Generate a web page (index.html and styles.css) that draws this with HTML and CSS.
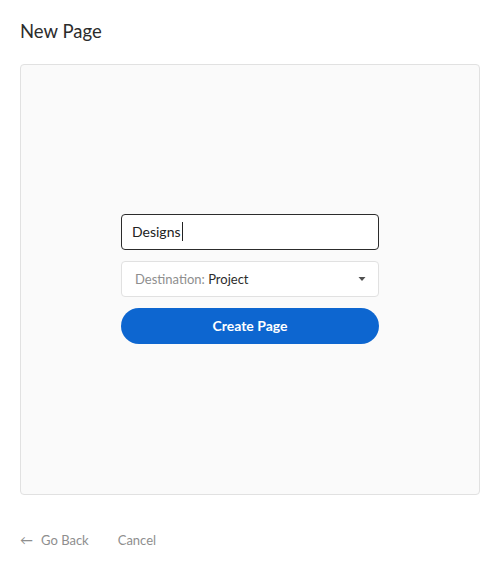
FILE: index.html
```html
<!DOCTYPE html>
<html>
<head>
<meta charset="utf-8">
<link rel="stylesheet" href="styles.css">
</head>
<body>
<div class="page">
  <h1 class="title">New Page</h1>
  <div class="panel">
    <div class="form">
      <div class="input"><span class="value">Designs</span><span class="caret"></span></div>
      <div class="select">
        <span class="label">Destination:</span>&nbsp;<span class="sel-value">Project</span>
        <svg class="chev" width="10" height="6" viewBox="0 0 10 6"><path d="M1.5 1h7L5 5z" fill="#505050"/></svg>
      </div>
      <button class="cta">Create Page</button>
    </div>
  </div>
  <div class="footer">
    <a class="link"><span class="arrow">&larr;</span>Go Back</a>
    <a class="link">Cancel</a>
  </div>
</div>
</body>
</html>
```
FILE: styles.css
```css
* { box-sizing: border-box; }
html, body { margin: 0; padding: 0; background: #fff; }
body { font-family: "Lato", "Open Sans", sans-serif; color: #2c2c2c; }
.page { padding: 18px 20px 0 20px; width: 500px; }
.title { margin: 0; font-size: 18.5px; font-weight: 400; line-height: 26px; color: #2c2c2c; }
.panel {
  margin-top: 20px;
  height: 431px;
  padding-bottom: 2px;
  background: #fafafa;
  border: 1px solid #e1e1e1;
  border-radius: 4px;
  display: flex;
  align-items: center;
  justify-content: center;
}
.form { width: 258px; display: flex; flex-direction: column; gap: 11px; }
.input {
  height: 36px;
  background: #fff;
  border: 1px solid #2c2c2c;
  border-radius: 4px;
  display: flex;
  align-items: center;
  padding-left: 10px;
  font-size: 14px;
  color: #222;
}
.caret { width: 1px; height: 19px; background: #222; margin-left: 1px; }
.select {
  height: 36px;
  background: #fff;
  border: 1px solid #e1e1e1;
  border-radius: 4px;
  display: flex;
  align-items: center;
  padding: 0 11px 0 13px;
  font-size: 13px;
}
.label { color: #8e8e8e; }
.sel-value { color: #2c2c2c; }
.chev { margin-left: auto; }
.cta {
  height: 36px;
  border: none;
  border-radius: 18px;
  background: #0d66d0;
  color: #fff;
  font-family: inherit;
  font-size: 14px;
  font-weight: 700;
  cursor: pointer;
}
.footer { margin-top: 37px; display: flex; gap: 29px; font-size: 13px; color: #8e8e8e; }
.link { color: #8e8e8e; display: flex; align-items: center; }
.arrow { margin-right: 8px; }
```
